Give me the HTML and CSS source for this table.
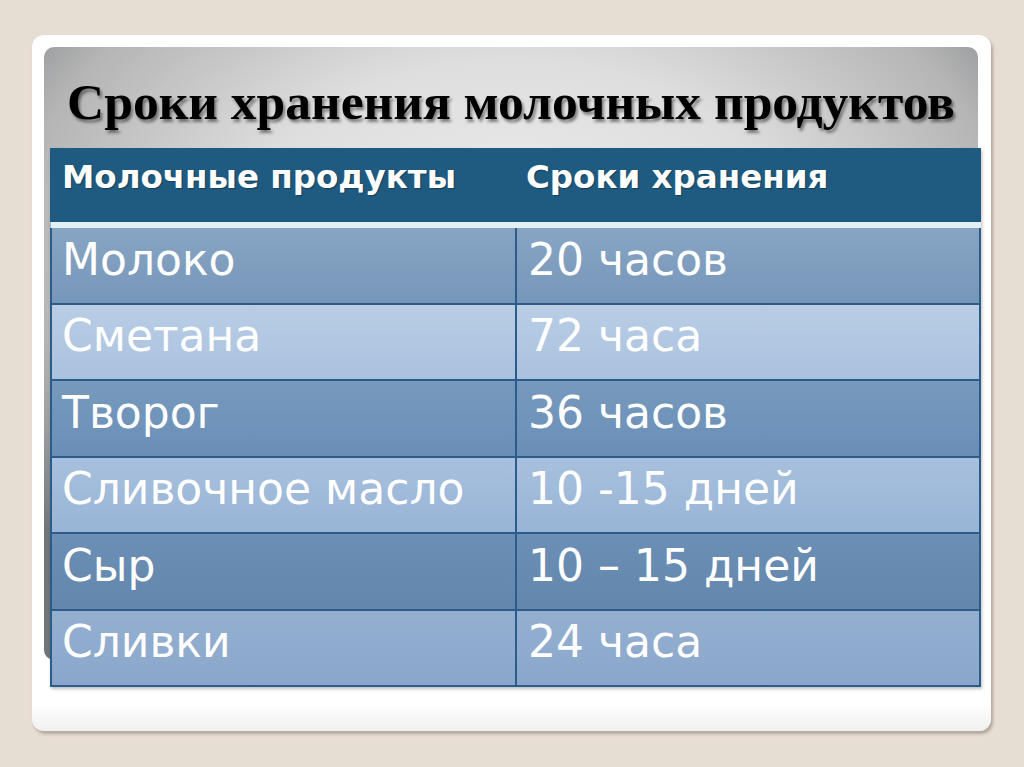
FILE: index.html
```html
<!DOCTYPE html>
<html lang="ru">
<head>
<meta charset="utf-8">
<title>Сроки хранения молочных продуктов</title>
<link rel="stylesheet" href="styles.css">
</head>
<body>
<div class="page">
  <div class="slide">
    <div class="panel">
      <h1 class="title">Сроки хранения молочных продуктов</h1>
      <div class="table">
        <div class="row head">
          <div class="cell">Молочные продукты</div>
          <div class="cell">Сроки хранения</div>
        </div>
        <div class="sep"></div>
        <div class="row r1"><div class="cell">Молоко</div><div class="cell">20 часов</div></div>
        <div class="row r2"><div class="cell">Сметана</div><div class="cell">72 часа</div></div>
        <div class="row r3"><div class="cell">Творог</div><div class="cell">36 часов</div></div>
        <div class="row r4"><div class="cell">Сливочное масло</div><div class="cell">10 -15 дней</div></div>
        <div class="row r5"><div class="cell">Сыр</div><div class="cell">10 – 15 дней</div></div>
        <div class="row r6"><div class="cell">Сливки</div><div class="cell">24 часа</div></div>
      </div>
    </div>
  </div>
</div>
</body>
</html>
```
FILE: styles.css
```css
html, body {
  margin: 0;
  padding: 0;
}
body {
  background: #e6ddd3;
  width: 1024px;
  height: 767px;
  overflow: hidden;
}
.page {
  padding: 35px 0 0 32px;
}
.slide {
  width: 935px;
  height: 672px;
  padding: 12px;
  background: linear-gradient(to bottom, #ffffff 0%, #ffffff 96%, #f0f0f0 100%);
  border-radius: 12px;
  box-shadow: 2px 3px 3px rgba(80, 70, 60, 0.35);
}
.panel {
  width: 928px;
  height: 613px;
  padding-left: 6px;
  border-radius: 10px;
  background:
    radial-gradient(ellipse 70% 70% at 50% 30%, #ececec 0%, #dedede 40%, #b5b5b5 75%, #70757a 100%);
}
.title {
  margin: 0 0 0 -6px;
  height: 101px;
  display: flex;
  align-items: center;
  justify-content: center;
  padding-top: 8px;
  box-sizing: border-box;
  font-family: "Liberation Serif", "Times New Roman", serif;
  font-weight: bold;
  font-size: 51.5px;
  color: #000;
  text-shadow: 2px 3px 3px rgba(0, 0, 0, 0.45);
}
.table {
  width: 931px;
  box-shadow: 1px 2px 3px rgba(0, 0, 0, 0.25);
}
.row {
  display: grid;
  grid-template-columns: 465px 466px;
  box-sizing: border-box;
}
.cell {
  display: flex;
  align-items: center;
  color: #fff;
  box-sizing: border-box;
  white-space: nowrap;
}
.head {
  height: 74px;
  background: #1f5a80;
}
.head .cell {
  font-family: "DejaVu Sans", Verdana, sans-serif;
  font-weight: bold;
  font-size: 32.5px;
  padding: 0 0 16px 12px;
  text-shadow: 1px 1px 1px rgba(0, 0, 0, 0.3);
}
.head .cell + .cell {
  padding-left: 11px;
}
.sep {
  height: 6px;
  background: #e3f1f6;
  border-left: 1px solid #9fb6c6;
}
.row.r1, .row.r2, .row.r3, .row.r4, .row.r5, .row.r6 {
  height: 76.5px;
  grid-template-columns: 463px 466px;
  border-left: 2px solid #2b5c8a;
  border-right: 2px solid #2b5c8a;
  border-bottom: 2px solid #2b5c8a;
}
.r1 .cell, .r2 .cell, .r3 .cell, .r4 .cell, .r5 .cell, .r6 .cell {
  font-family: "DejaVu Sans", Verdana, sans-serif;
  font-size: 44px;
  padding: 0 0 12px 10px;
}
.r1 .cell + .cell, .r2 .cell + .cell, .r3 .cell + .cell,
.r4 .cell + .cell, .r5 .cell + .cell, .r6 .cell + .cell {
  border-left: 2px solid #2b5c8a;
  padding-left: 11px;
}
.r1 { background: linear-gradient(#87a5c3, #7797ba); }
.r2 { background: linear-gradient(#b9cde5, #aac2df); }
.r3 { background: linear-gradient(#7799bd, #6a8fb7); }
.r4 { background: linear-gradient(#a7c0dd, #98b4d6); }
.r5 { background: linear-gradient(#6c8fb5, #6386ad); }
.r6 { background: linear-gradient(#94afd0, #8aa7cb); }
```
